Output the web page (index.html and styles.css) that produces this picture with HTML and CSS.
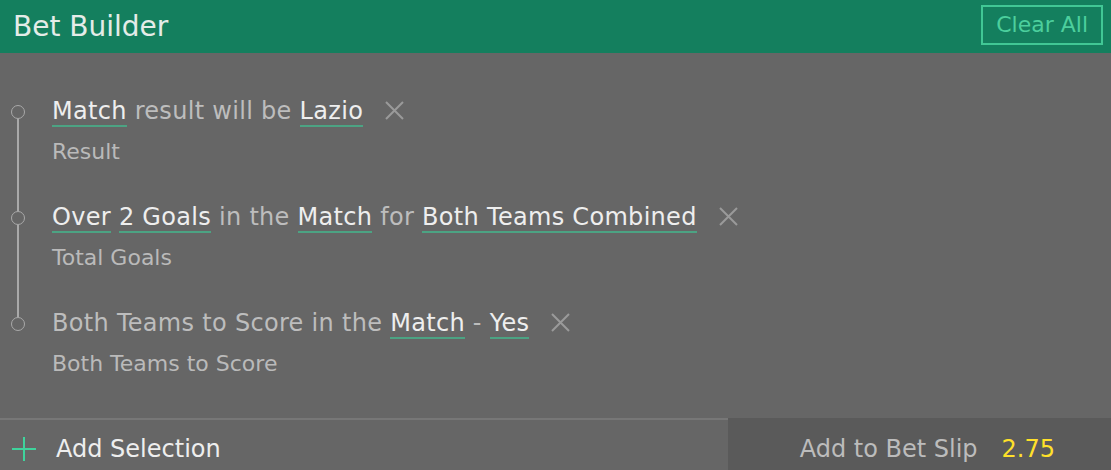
FILE: index.html
```html
<!DOCTYPE html>
<html lang="en">
<head>
    <meta charset="UTF-8">
    <meta name="viewport" content="width=device-width, initial-scale=1.0">
    <title>Bet Builder</title>
    <link rel="stylesheet" href="styles.css">
</head>
<body>
    <header class="bar">
        <h1 class="bar-title">Bet Builder</h1>
        <button class="clear-btn">Clear All</button>
    </header>

    <main class="legs">
        <div class="leg">
            <p class="leg-title"><span class="pick">Match</span> result will be <span class="pick">Lazio</span><button class="remove" aria-label="Remove"><svg width="19" height="19" viewBox="0 0 19 19"><path d="M1 1L18 18M18 1L1 18" stroke="#9a9a9a" stroke-width="2" fill="none"/></svg></button></p>
            <p class="leg-market">Result</p>
        </div>
        <div class="leg">
            <p class="leg-title"><span class="pick">Over</span> <span class="pick">2 Goals</span> in the <span class="pick">Match</span> for <span class="pick">Both Teams Combined</span><button class="remove" aria-label="Remove"><svg width="19" height="19" viewBox="0 0 19 19"><path d="M1 1L18 18M18 1L1 18" stroke="#9a9a9a" stroke-width="2" fill="none"/></svg></button></p>
            <p class="leg-market">Total Goals</p>
        </div>
        <div class="leg">
            <p class="leg-title">Both Teams to Score in the <span class="pick">Match</span> - <span class="pick">Yes</span><button class="remove" aria-label="Remove"><svg width="19" height="19" viewBox="0 0 19 19"><path d="M1 1L18 18M18 1L1 18" stroke="#9a9a9a" stroke-width="2" fill="none"/></svg></button></p>
            <p class="leg-market">Both Teams to Score</p>
        </div>
    </main>

    <footer class="actions">
        <div class="add-selection">
            <svg width="24" height="24" viewBox="0 0 24 24"><path d="M12 0V24M0 12H24" stroke="#3fd39c" stroke-width="2" fill="none"/></svg>
            <span>Add Selection</span>
        </div>
        <div class="add-slip">
            <span>Add to Bet Slip</span>
            <span class="odds">2.75</span>
        </div>
    </footer>
</body>
</html>
```

FILE: styles.css
```css
body {
    margin: 0;
    padding: 0;
    background-color: #666666;
    font-family: "DejaVu Sans", sans-serif;
    width: 1111px;
    height: 470px;
    overflow: hidden;
}
.bar {
    height: 53px;
    background-color: #147f5e;
    display: flex;
    align-items: center;
    justify-content: space-between;
    padding: 0 8px 0 13px;
}
.bar-title {
    margin: 0;
    font-size: 28px;
    font-weight: normal;
    color: #e4ece8;
}
.clear-btn {
    height: 40px;
    margin-top: -4px;
    padding: 0 13px;
    background: none;
    border: 2px solid #41c795;
    color: #4ccf9d;
    font-family: inherit;
    font-size: 22px;
}
.legs {
    height: 365px;
    padding-top: 43px;
    box-sizing: border-box;
}
.leg {
    position: relative;
    height: 106px;
    padding-left: 52px;
}
.leg::before {
    content: "";
    position: absolute;
    left: 11px;
    top: 9px;
    width: 14px;
    height: 14px;
    box-sizing: border-box;
    border: 1.5px solid #a9a9a9;
    border-radius: 50%;
}
.leg::after {
    content: "";
    position: absolute;
    left: 17px;
    top: 23px;
    width: 2px;
    height: 92px;
    background-color: #a9a9a9;
}
.leg:last-child::after {
    display: none;
}
.leg-title {
    margin: 0;
    height: 30px;
    line-height: 30px;
    font-size: 24px;
    letter-spacing: 0.3px;
    color: #bdbdbd;
    white-space: nowrap;
}
.pick {
    color: #eeeeee;
    border-bottom: 2px solid #4ca383;
}
.remove {
    margin-left: 22px;
    padding: 0;
    background: none;
    border: none;
    vertical-align: -1px;
}
.leg-market {
    margin: 11px 0 0;
    line-height: 30px;
    font-size: 22px;
    color: #bababa;
}
.actions {
    display: flex;
    height: 52px;
}
.add-selection {
    flex: 1;
    display: flex;
    align-items: center;
    gap: 20px;
    padding: 8px 0 0 12px;
    border-top: 2px solid #777777;
    font-size: 24px;
    color: #eeeeee;
}
.add-slip {
    width: 383px;
    background-color: #5a5a5a;
    display: flex;
    align-items: center;
    justify-content: flex-end;
    gap: 24px;
    padding: 10px 56px 0 0;
    box-sizing: border-box;
    font-size: 24px;
    color: #bcbcbc;
}
.odds {
    color: #ffe02a;
}
```
